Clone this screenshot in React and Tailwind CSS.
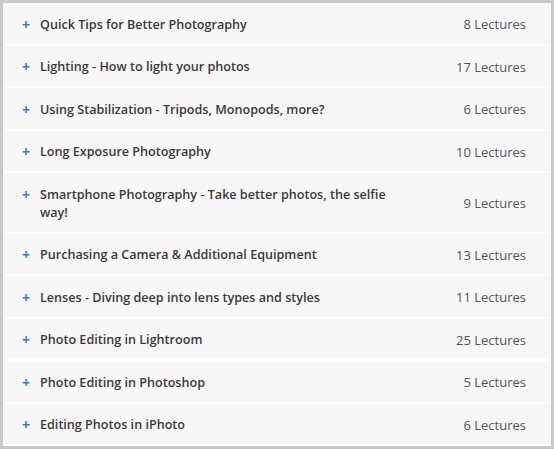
import React from 'react'

const sections = [
    { title: 'Quick Tips for Better Photography', lectures: 8 },
    { title: 'Lighting - How to light your photos', lectures: 17 },
    { title: 'Using Stabilization - Tripods, Monopods, more?', lectures: 6 },
    { title: 'Long Exposure Photography', lectures: 10 },
    { title: 'Smartphone Photography - Take better photos, the selfie way!', lectures: 9 },
    { title: 'Purchasing a Camera & Additional Equipment', lectures: 13 },
    { title: 'Lenses - Diving deep into lens types and styles', lectures: 11 },
    { title: 'Photo Editing in Lightroom', lectures: 25 },
    { title: 'Photo Editing in Photoshop', lectures: 5 },
    { title: 'Editing Photos in iPhoto', lectures: 6 },
]

const App = () => {
    return (
        <div className="w-[554px] h-[450px] bg-white">
            <div
                className="border-[3px] border-[#c9c9c9] bg-white pl-px pb-[2px] flex flex-col gap-[2px]"
                style={{ fontFamily: '"Open Sans", "Liberation Sans", sans-serif' }}
            >
                {sections.map((s) => (
                    <div
                        key={s.title}
                        className="flex items-center justify-between bg-[#f7f7f7] pl-[18px] pr-[25px] pt-[11.5px] pb-[10px] text-[13px] leading-[18px]"
                    >
                        <div className="flex items-start pt-px">
                            <span className="w-[11px] mr-[7px] text-[#2f7de1] font-bold text-[14px]">+</span>
                            <span className="w-[360px] font-semibold text-[12.6px] text-[#3a3a3a]">{s.title}</span>
                        </div>
                        <span className="text-[#555555]">{s.lectures} Lectures</span>
                    </div>
                ))}
            </div>
        </div>
    )
}

export default App
